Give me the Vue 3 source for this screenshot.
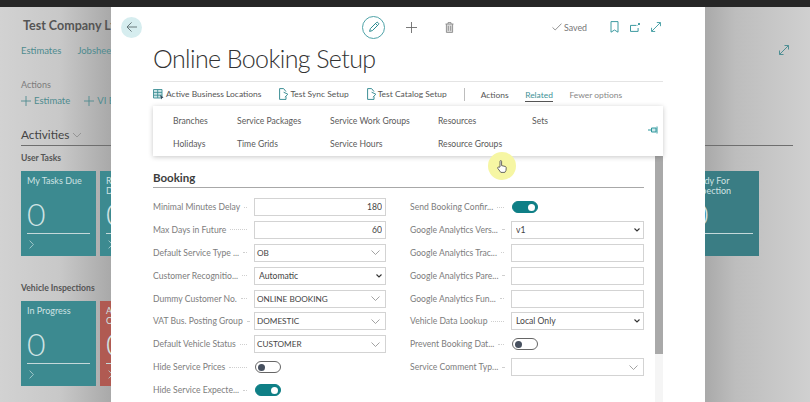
<template>
  <div class="page">
    <div class="topbar"></div>

    <div class="back-page">
      <div class="company">Test Company Ltd</div>
      <div class="nav-row">
        <span>Estimates</span>
        <span>Jobsheets</span>
        <svg class="page-expand" width="12" height="12" viewBox="0 0 12 12">
          <path d="M1.5 10.5 10.5 1.5M6.5 1.5h4v4M1.5 6.5v4h4" fill="none" stroke="#4f8f94" stroke-width="1" />
        </svg>
      </div>
      <div class="actions-label">Actions</div>
      <div class="actions-row">
        <span class="page-action">
          <svg width="10" height="10" viewBox="0 0 10 10">
            <path d="M5 0v10M0 5h10" stroke="#4e8b8f" stroke-width="0.9" />
          </svg>
          Estimate
        </span>
        <span class="page-action">
          <svg width="10" height="10" viewBox="0 0 10 10">
            <path d="M5 0v10M0 5h10" stroke="#4e8b8f" stroke-width="0.9" />
          </svg>
          VI Entry
        </span>
      </div>
      <div class="activities">
        Activities
        <svg width="10" height="6" viewBox="0 0 10 6">
          <path d="M1 1 5 5 9 1" fill="none" stroke="#8a8a8a" stroke-width="0.8" />
        </svg>
      </div>
      <div class="group-title first">User Tasks</div>
      <div class="tiles">
        <div v-for="tile in userTiles" :key="tile.name" class="tile" :class="tile.kind">
          <div class="tile-name">{{ tile.name }}</div>
          <div class="tile-value">0</div>
          <svg class="tile-foot" width="5" height="9" viewBox="0 0 5 9">
            <path d="M.6.6 4.4 4.5.6 8.4" fill="none" stroke="#b9d6d8" stroke-width="0.8" />
          </svg>
        </div>
      </div>
      <div class="group-title second">Vehicle Inspections</div>
      <div class="tiles">
        <div v-for="tile in inspectionTiles" :key="tile.name" class="tile" :class="tile.kind">
          <div class="tile-name">{{ tile.name }}</div>
          <div class="tile-value">0</div>
          <svg class="tile-foot" width="5" height="9" viewBox="0 0 5 9">
            <path d="M.6.6 4.4 4.5.6 8.4" fill="none" stroke="#b9d6d8" stroke-width="0.8" />
          </svg>
        </div>
      </div>
    </div>

    <div class="modal">
      <div class="toolbar">
        <div class="back-btn">
          <svg width="12" height="12" viewBox="0 0 12 12">
            <path d="M11 6H1.2M5.6 1.4 1 6l4.6 4.6" fill="none" stroke="#5d6d70" stroke-width="0.9" />
          </svg>
        </div>
        <div class="edit-btn">
          <svg width="12" height="12" viewBox="0 0 12 12">
            <path d="M1.6 10.4 2.4 7.6 8.4 1.6a1 1 0 0 1 1.5 0l.5.5a1 1 0 0 1 0 1.5l-6 6zM7.6 2.6l1.8 1.8" fill="none" stroke="#2b8b90" stroke-width="1" />
          </svg>
        </div>
        <svg class="add-icon" width="11" height="11" viewBox="0 0 11 11">
          <path d="M5.5 0v11M0 5.5h11" stroke="#6b6b6b" stroke-width="0.9" />
        </svg>
        <svg class="trash-icon" width="9" height="11" viewBox="0 0 9 11">
          <path d="M1.4 2h6.2v8.4H1.4z" fill="#dcdcdc" />
          <path d="M.5 2h8M3 2V.6h3V2M1.4 2v8.4h6.2V2M3.3 3.8v5M5.7 3.8v5" fill="none" stroke="#8a8a8a" stroke-width="0.9" />
        </svg>
        <div class="saved">
          <svg width="10" height="8" viewBox="0 0 10 8">
            <path d="M.5 4.4 3.2 7 9.5.6" fill="none" stroke="#777" stroke-width="0.8" />
          </svg>
          Saved
        </div>
        <div class="page-icons">
          <svg width="9" height="12" viewBox="0 0 9 12">
            <path d="M1 .6h7v10.6L4.5 9 1 11.2z" fill="none" stroke="#3d9aa0" stroke-width="1" />
          </svg>
          <svg width="10" height="9" viewBox="0 0 10 9">
            <path d="M6.5 2.4H.5v6h7.6V5M8 .4h1.6V2M9.6.4 7.6 2.4" fill="none" stroke="#3d9aa0" stroke-width="1" />
          </svg>
          <svg width="10" height="10" viewBox="0 0 11 11">
            <path d="M.8 10.2 10.2.8M6.4.6h4v4M.6 6.4v4h4" fill="none" stroke="#3d9aa0" stroke-width="1" />
          </svg>
        </div>
      </div>

      <h1 class="title">Online Booking Setup</h1>

      <div class="action-bar">
        <span class="action">
          <svg width="11" height="11" viewBox="0 0 11 11">
            <path d="M.5.5h8.5v8.5H.5zM.5 3.4h8.5M.5 6.2h8.5M4.7.5v8.5" fill="#cfe6e8" stroke="#3d8f95" stroke-width="0.9" />
            <path d="M7 6l3.6 2.6-1.6.4-.6 1.6z" fill="#33475a" />
          </svg>
          Active Business Locations
        </span>
        <span v-for="name in testActions" :key="name" class="action doc-action">
          <svg width="10" height="12" viewBox="0 0 10 12">
            <path d="M7 3.6 4.6.6H.6v10.8H7V8.6M4.6 4.2 8.8 6.2 6 9.2" fill="none" stroke="#3d8f95" stroke-width="1" />
          </svg>
          {{ name }}
        </span>
        <span class="bar-sep"></span>
        <span class="tab">Actions</span>
        <span class="tab tab-active">Related</span>
        <span class="tab tab-muted">Fewer options</span>
      </div>

      <div class="body-area">
        <div class="content">
          <div class="section-title">Booking</div>
          <div class="form">
            <div v-for="col in columns" :key="col.id" class="form-col">
              <div v-for="row in col.rows" :key="row.label" class="form-row">
                <div class="label">
                  <span class="label-text">{{ row.label }}</span>
                  <span class="dots"></span>
                </div>
                <div class="control">
                  <input v-if="row.type === 'text'" class="input" type="text" :value="row.value" readonly />
                  <div v-else-if="row.type === 'lookup'" class="input lookup">
                    <span>{{ row.value }}</span>
                    <svg width="9" height="5" viewBox="0 0 9 5">
                      <path d="M.5.5 4.5 4.5 8.5.5" fill="none" stroke="#8c8c8c" stroke-width="0.8" />
                    </svg>
                  </div>
                  <div v-else-if="row.type === 'select'" class="select-wrap">
                    <select class="input native">
                      <option>{{ row.value }}</option>
                    </select>
                    <svg class="select-arrow" width="6" height="4" viewBox="0 0 6 4">
                      <path d="M.5.5 3 3 5.5.5" fill="none" stroke="#333" stroke-width="1.1" />
                    </svg>
                  </div>
                  <span v-else class="switch" :class="{ on: row.value }"><i></i></span>
                </div>
              </div>
            </div>
          </div>
        </div>
        <div class="scrollbar"><div class="thumb"></div></div>
      </div>

      <div class="popup">
        <div class="popup-grid">
          <span v-for="item in related" :key="item">{{ item }}</span>
        </div>
        <svg class="pin" width="10" height="8" viewBox="0 0 10 8">
          <path d="M0 4h3.5" stroke="#2f979d" stroke-width="1" />
          <path d="M3.5 2h4.5v4H3.5z" fill="#cfeaec" stroke="#2f979d" stroke-width="1" />
          <path d="M9 .5v7" stroke="#2f979d" stroke-width="1" />
        </svg>
      </div>
    </div>

    <div class="cursor-mark">
      <svg width="10" height="13" viewBox="0 0 10 13">
        <path d="M3 7V1.4a.8.8 0 0 1 1.6 0V5.6l3.4.8c.9.2 1.3.8 1.2 1.7L9 10.4 7.8 12.4H3.8L.8 8.4c-.6-.9.5-1.8 1.2-1.1z" fill="#fff" stroke="#444" stroke-width="0.8" />
      </svg>
    </div>
  </div>
</template>

<script setup>
const userTiles = [
  { name: "My Tasks Due" },
  { name: "Reminders\nDue" },
  { name: "Ready For\nInspection", kind: "tile-end" },
];

const inspectionTiles = [
  { name: "In Progress" },
  { name: "Awaiting\nCustomer", kind: "tile-red" },
];

const testActions = ["Test Sync Setup", "Test Catalog Setup"];

const related = [
  "Branches",
  "Service Packages",
  "Service Work Groups",
  "Resources",
  "Sets",
  "Holidays",
  "Time Grids",
  "Service Hours",
  "Resource Groups",
];

const columns = [
  {
    id: "left",
    rows: [
      { label: "Minimal Minutes Delay", type: "text", value: "180" },
      { label: "Max Days in Future", type: "text", value: "60" },
      { label: "Default Service Type ...", type: "lookup", value: "OB" },
      { label: "Customer Recognitio...", type: "select", value: "Automatic" },
      { label: "Dummy Customer No.", type: "lookup", value: "ONLINE BOOKING" },
      { label: "VAT Bus. Posting Group", type: "lookup", value: "DOMESTIC" },
      { label: "Default Vehicle Status", type: "lookup", value: "CUSTOMER" },
      { label: "Hide Service Prices", type: "switch", value: false },
      { label: "Hide Service Expecte...", type: "switch", value: true },
    ],
  },
  {
    id: "right",
    rows: [
      { label: "Send Booking Confir...", type: "switch", value: true },
      { label: "Google Analytics Vers...", type: "select", value: "v1" },
      { label: "Google Analytics Trac...", type: "text", value: "" },
      { label: "Google Analytics Pare...", type: "text", value: "" },
      { label: "Google Analytics Fun...", type: "text", value: "" },
      { label: "Vehicle Data Lookup", type: "select", value: "Local Only" },
      { label: "Prevent Booking Dat...", type: "switch", value: false },
      { label: "Service Comment Typ...", type: "lookup", value: "" },
    ],
  },
];
</script>

<style>
html,
body {
  margin: 0;
  overflow: hidden;
}
</style>

<style scoped>
.page {
  position: relative;
  width: 810px;
  height: 402px;
  overflow: hidden;
  font-family: Lato, "Liberation Sans", sans-serif;
  font-size: 9.5px;
  color: #555;
  background: linear-gradient(90deg, #d2d2d2 0, #c8c8c8 60px, #a9a9a9 111px, #a9a9a9 705px, #bdbdbd 735px, #d0d0d0 810px);
}

.topbar {
  height: 7px;
  background: #262626;
}

.back-page {
  padding: 11px 17px 0 21px;
}

.company {
  padding-left: 2px;
  font-size: 12.5px;
  font-weight: 700;
  line-height: 15px;
  color: #555;
}

.nav-row {
  display: flex;
  align-items: center;
  gap: 16px;
  margin-top: 9px;
  height: 16px;
  color: #4e8b8f;
}

.page-expand {
  margin-left: auto;
  margin-right: 3px;
}

.actions-label {
  margin-top: 20px;
  height: 14px;
  line-height: 14px;
  font-size: 9px;
  color: #7b7b7b;
}

.actions-row {
  display: flex;
  gap: 14px;
  height: 18px;
  line-height: 18px;
  color: #4e8b8f;
  white-space: nowrap;
}

.page-action {
  display: flex;
  align-items: center;
  gap: 3px;
}

.activities {
  display: flex;
  align-items: center;
  gap: 3px;
  margin-top: 14px;
  height: 21px;
  font-size: 11.8px;
  font-weight: 400;
  color: #444;
  border-bottom: 1px solid #6e6e6e;
}

.group-title {
  font-weight: 700;
  font-size: 8.6px;
  color: #555;
  height: 14px;
  line-height: 14px;
}

.group-title.first {
  margin-top: 5px;
}

.group-title.second {
  margin-top: 25px;
}

.tiles {
  display: flex;
  gap: 4px;
  margin-top: 6px;
}

.tile {
  width: 75px;
  height: 85px;
  padding: 5px 6px;
  box-sizing: border-box;
  background: #3c8a90;
  color: #cfe2e3;
}

.tile-red {
  background: #b05a52;
}

.tile-end {
  margin-left: auto;
  margin-right: 34px;
  background: #3a7d84;
}

.tile-name {
  height: 21px;
  line-height: 10px;
  font-size: 9px;
  white-space: pre-line;
}

.tile-value {
  font-size: 32px;
  font-weight: 300;
  line-height: 33px;
  padding-bottom: 3px;
  border-bottom: 1px solid #c5d9da;
}

.tile-foot {
  display: block;
  margin: 6px 0 0 2px;
}

.modal {
  position: absolute;
  left: 111px;
  top: 7px;
  width: 594px;
  height: 395px;
  overflow: hidden;
  background: #fff;
  font-size: 8.6px;
}

.toolbar {
  display: flex;
  align-items: center;
  height: 40px;
}

.back-btn {
  display: flex;
  align-items: center;
  justify-content: center;
  width: 21px;
  height: 21px;
  margin-left: 10px;
  border-radius: 50%;
  background: #d6edef;
}

.edit-btn {
  display: flex;
  align-items: center;
  justify-content: center;
  width: 23px;
  height: 23px;
  margin-left: 220px;
  border: 1px solid #4fa3a8;
  border-radius: 50%;
  box-sizing: border-box;
}

.add-icon {
  margin-left: 21px;
}

.trash-icon {
  margin-left: 28px;
}

.saved {
  display: flex;
  align-items: center;
  gap: 2px;
  margin-left: 98px;
  font-size: 8.8px;
  color: #777;
}

.page-icons {
  display: flex;
  align-items: center;
  gap: 11px;
  margin-left: 23px;
}

.title {
  margin: -7px 0 5px 42px;
  height: 36px;
  font-size: 25px;
  line-height: 36px;
  font-weight: 300;
  letter-spacing: -0.6px;
  color: #333;
}

.action-bar {
  display: flex;
  align-items: center;
  height: 24px;
  margin: 0 42px;
  padding-top: 1px;
  box-sizing: border-box;
  border-top: 1px solid #e4e4e4;
  font-size: 8.45px;
  white-space: nowrap;
  color: #555;
}

.action {
  display: flex;
  align-items: center;
  gap: 2px;
  margin-right: 18px;
}

.doc-action {
  gap: 1px;
}

.bar-sep {
  width: 1px;
  height: 13px;
  margin: 0 16px 0 -1px;
  background: #bdbdbd;
}

.tab {
  margin-right: 16.5px;
  padding: 3px 0 1px;
  border-bottom: 1px solid transparent;
}

.tab-active {
  color: #3f9297;
  border-bottom-color: #555;
}

.tab-muted {
  color: #888;
}

.body-area {
  display: flex;
  margin: 0 42px;
  padding-top: 64px;
}

.content {
  width: 491px;
}

.section-title {
  height: 18px;
  font-size: 11.5px;
  font-weight: 700;
  line-height: 17px;
  color: #3d3d3d;
  border-bottom: 1px solid #a8a8a8;
}

.form {
  display: grid;
  grid-template-columns: 233px 234px;
  column-gap: 24px;
  padding-top: 10px;
}

.form-col {
  min-width: 0;
}

.form-row {
  display: flex;
  align-items: center;
  height: 18px;
  margin-bottom: 4.9px;
}

.label {
  display: flex;
  align-items: center;
  gap: 4px;
  width: 94px;
  margin-right: 7px;
  color: #7d7d7d;
  white-space: nowrap;
}

.dots {
  flex: 1;
  min-width: 2px;
  border-bottom: 1px dotted #cfcfcf;
}

.control {
  flex: 1;
  min-width: 0;
}

.input {
  display: block;
  width: 100%;
  height: 18px;
  margin: 0;
  padding: 0 3px;
  box-sizing: border-box;
  border: 1px solid #d3d3d3;
  border-radius: 0;
  background: #fff;
  font-family: inherit;
  font-size: 8.6px;
  color: #444;
  text-align: right;
  outline: none;
}

.lookup {
  display: flex;
  align-items: center;
  justify-content: space-between;
  padding: 0 5px 0 2px;
  font-size: 8.2px;
  text-align: left;
}

.select-wrap {
  position: relative;
}

.native {
  padding-left: 4px;
  text-align: left;
  appearance: none;
}

.select-arrow {
  position: absolute;
  right: 4px;
  top: 7px;
}

.switch {
  display: block;
  position: relative;
  width: 26px;
  height: 12px;
  margin-left: 1px;
  box-sizing: border-box;
  border: 1px solid #666;
  border-radius: 6px;
  background: #fff;
}

.switch i {
  position: absolute;
  left: 2px;
  top: 1.5px;
  width: 7px;
  height: 7px;
  border-radius: 50%;
  background: #47505f;
}

.switch.on {
  border-color: #0f7f86;
  background: #0f7f86;
}

.switch.on i {
  left: auto;
  right: 2px;
  background: #fff;
}

.scrollbar {
  width: 8px;
  margin: -14px 0 0 11px;
  height: 300px;
  background: #f5f5f5;
}

.thumb {
  height: 199px;
  background: #a9a9a9;
}

.popup {
  position: absolute;
  left: 42px;
  top: 99px;
  width: 510px;
  height: 50px;
  background: #fff;
  box-shadow: 0 1px 5px rgba(0, 0, 0, 0.22);
}

.popup-grid {
  display: grid;
  grid-template-columns: 64px 93px 108px 94px auto;
  grid-auto-rows: 23px;
  padding: 4px 0 0 20px;
  line-height: 23px;
  color: #5a5a5a;
}

.pin {
  position: absolute;
  right: 5px;
  top: 20px;
}

.cursor-mark {
  position: absolute;
  left: 488px;
  top: 152px;
  display: flex;
  align-items: center;
  justify-content: center;
  width: 28px;
  height: 28px;
  border-radius: 50%;
  background: #f6f6a3;
}
</style>
